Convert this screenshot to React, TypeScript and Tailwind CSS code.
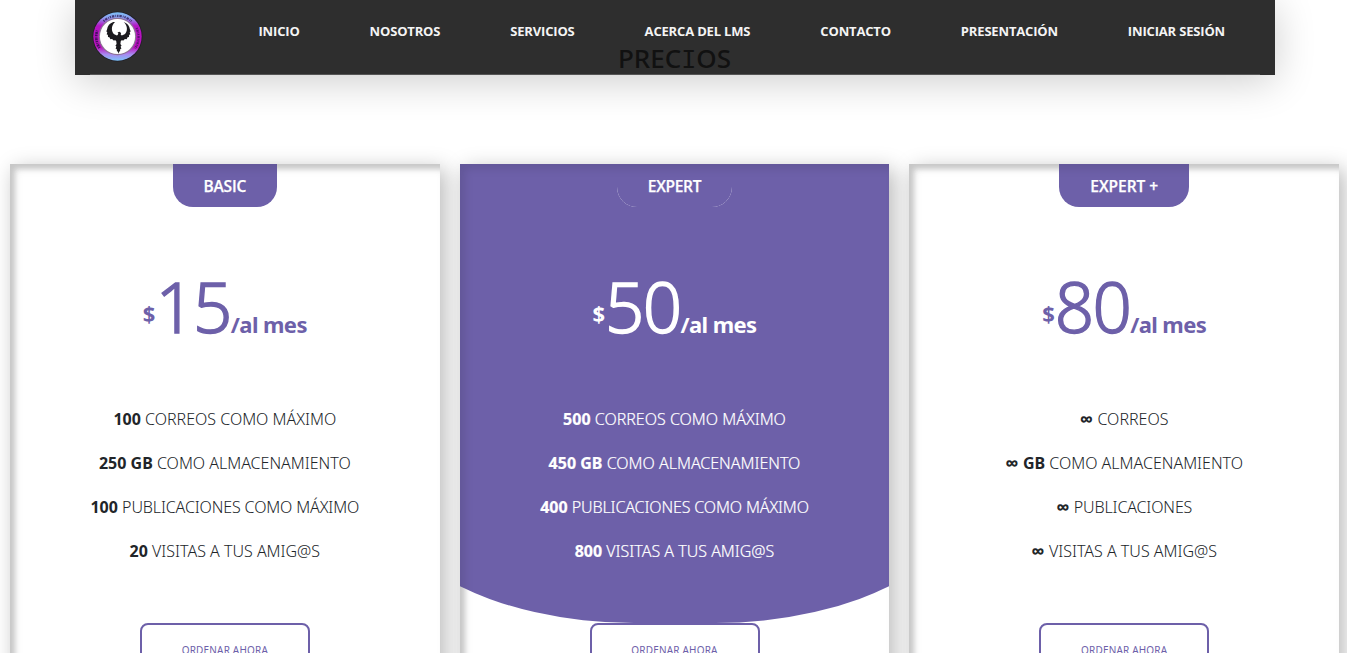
import React from 'react';

const NAV_ITEMS = ['INICIO', 'NOSOTROS', 'SERVICIOS', 'ACERCA DEL LMS', 'CONTACTO', 'PRESENTACIÓN', 'INICIAR SESIÓN'];

type Feature = { amount: string; unit?: string; label: string };
type Plan = { name: string; badgeClass: string; price: string; featured?: boolean; features: Feature[] };

const PLANS: Plan[] = [
  {
    name: 'BASIC',
    badgeClass: 'w-[104px] tracking-[-0.15px]',
    price: '15',
    features: [
      { amount: '100', label: 'CORREOS COMO MÁXIMO' },
      { amount: '250', unit: 'GB', label: 'COMO ALMACENAMIENTO' },
      { amount: '100', label: 'PUBLICACIONES COMO MÁXIMO' },
      { amount: '20', label: 'VISITAS A TUS AMIG@S' },
    ],
  },
  {
    name: 'EXPERT',
    badgeClass: 'w-[115px] tracking-[-0.3px]',
    price: '50',
    featured: true,
    features: [
      { amount: '500', label: 'CORREOS COMO MÁXIMO' },
      { amount: '450', unit: 'GB', label: 'COMO ALMACENAMIENTO' },
      { amount: '400', label: 'PUBLICACIONES COMO MÁXIMO' },
      { amount: '800', label: 'VISITAS A TUS AMIG@S' },
    ],
  },
  {
    name: 'EXPERT +',
    badgeClass: 'w-[130px] tracking-[-0.05px]',
    price: '80',
    features: [
      { amount: '∞', label: 'CORREOS' },
      { amount: '∞', unit: 'GB', label: 'COMO ALMACENAMIENTO' },
      { amount: '∞', label: 'PUBLICACIONES' },
      { amount: '∞', label: 'VISITAS A TUS AMIG@S' },
    ],
  },
];

function Logo() {
  return (
    <svg viewBox="0 0 56 56" className="h-14 w-14 shrink-0">
      <defs>
        <linearGradient id="ring" x1="0" y1="0" x2="0" y2="1">
          <stop offset="0" stopColor="#7cc0f4" />
          <stop offset="0.12" stopColor="#8f9cf0" />
          <stop offset="0.28" stopColor="#b414c4" />
          <stop offset="0.72" stopColor="#bb12bd" />
          <stop offset="0.87" stopColor="#a88af0" />
          <stop offset="1" stopColor="#7cc4f8" />
        </linearGradient>
      </defs>
      <circle cx="27.5" cy="28.5" r="25" fill="#1f1d26" />
      <circle cx="27.5" cy="28.5" r="24.2" fill="url(#ring)" />
      <circle cx="27.5" cy="28.5" r="18.8" fill="#8d7396" />
      <circle cx="27.5" cy="28.5" r="17.6" fill="#fff" />
      <g fill="none" stroke="#251046">
        <path d="M13.5 13.2a21 21 0 0 1 28 0" strokeWidth="2.2" strokeDasharray="1.4 .9 2.4 1 .8 .9" opacity=".7" />
        <path d="M9.5 40a21 21 0 0 1-2.2-18" strokeDasharray="1.2 .8 2 .7 .8 .8" strokeWidth="2.6" opacity=".8" />
        <path d="M46.5 20a21 21 0 0 1-1.3 20.5" strokeDasharray="1.2 .8 2 .7 .8 .8" strokeWidth="2.2" opacity=".6" />
      </g>
      {/* phoenix: raised wings with feathered edges, head and tail */}
      <g fill="#1b1a1e">
        <path d="M23.2 14c-3.4 1.2-5.8 4-6.100 7.200l-.8 2.300 1 .6-.6 2.300 1.200.4.1 2.300 1.400.2 1 1.900 1.700-.1 1.500 1.300 1.700-.1.9.7.4 3-1.200 1.800 1 .8-.8 2.200 1.100.3.3 2.400.7-.3.8 2.500.8-2.500.7.300.3-2.400 1.100-.3-.8-2.200 1-.8-1.200-1.800.4-3 .9-.7 1.700.1 1.500-1.300 1.700.1 1-1.900 1.400-.2.1-2.300 1.200-.4-.6-2.300 1-.6-.8-2.300c-.3-3.200-2.700-6-6.100-7.200 2 2 3.200 4.300 3.100 6.600.1 2.300-.8 4.500-2.300 5.700l-2.800 1.200-1.100-.9.400-1.600-1.700-1.300-1.900.8.8.7-.3 1.400-1 .9-2.800-1.200c-1.500-1.200-2.400-3.400-2.300-5.700-.1-2.300 1.100-4.600 3.100-6.600z" />
      </g>
    </svg>
  );
}

function Navbar() {
  return (
    <header className="absolute left-[75px] top-0 flex h-[75px] w-[1200px] bg-[#2e2e2e] px-[15px] shadow-[0_6px_40px_rgba(0,0,0,0.2)]">
      <div className="flex grow justify-between border-b border-[#555]">
        <div className="pt-2">
          <Logo />
        </div>
        <nav className="mr-[35px] flex gap-[70px] pt-[21px] font-['Open_Sans',sans-serif] text-[13px] font-bold leading-5 tracking-[-0.17px] text-[#f4f4f4]">
          {NAV_ITEMS.map((item) => (
            <a key={item} className="whitespace-nowrap">
              {item}
            </a>
          ))}
        </nav>
      </div>
    </header>
  );
}

function FeatureRow({ amount, unit, label }: Feature) {
  return (
    <li className="h-6 whitespace-nowrap">
      <b className="font-bold">
        {amount === '∞' ? (
          <span className="relative top-px font-['Open_Sans',sans-serif] text-[19px] leading-none">{amount}</span>
        ) : (
          amount
        )}
        {unit && ` ${unit}`}
      </b>{' '}
      <span className={label.startsWith('PUB') ? 'tracking-[-0.13px]' : ''}>{label}</span>
    </li>
  );
}

function PlanCard({ name, badgeClass, price, featured, features }: Plan) {
  return (
    <article className="relative h-[620px] min-w-0 flex-1 bg-white shadow-[5px_5px_20px_rgba(0,0,0,0.28),inset_5px_5px_5px_rgba(0,0,0,0.14)]">
      {featured && (
        <div className="absolute inset-x-0 top-0 h-[459px] overflow-hidden">
          <div className="absolute -left-[20%] -right-[20%] inset-y-0 rounded-b-[260px_143px] bg-[#6d60a9]" />
        </div>
      )}
      <div className="relative flex flex-col items-center font-['Noto_Sans',sans-serif]">
        <div className={featured ? 'rounded-b-[20px] bg-white' : 'rounded-b-[20px]'}>
          <h3
            className={`h-[43px] whitespace-nowrap rounded-b-[20px] bg-[#6d60a9] pt-[10px] text-center font-['Open_Sans',sans-serif] text-[15.5px] font-semibold leading-6 text-white [-webkit-text-stroke:0.25px] ${badgeClass}`}
          >
            {name}
          </h3>
        </div>
        <p className={`mt-[49px] flex h-[100px] items-baseline leading-[100px] ${featured ? 'text-white' : 'text-[#6d60a9]'}`}>
          <span className="relative -top-[11px] text-[22px] font-bold">$</span>
          <span className="text-[69px] font-light tracking-[-1.7px] [-webkit-text-stroke:1.4px]">{price}</span>
          <span className="text-[22px] font-bold tracking-[-0.6px]">/al mes</span>
        </p>
        <ul
          className={`mt-[51px] flex flex-col gap-5 text-center text-[16px] font-light leading-6 ${
            featured ? 'text-white [-webkit-text-stroke:0.2px]' : 'text-[#212529]'
          }`}
        >
          {features.map((f) => (
            <FeatureRow key={f.label} {...f} />
          ))}
        </ul>
        <button className="mt-[60px] h-[54px] w-[170px] rounded-lg border-2 border-[#6d60a9] bg-white text-[10px] tracking-[0.18px] text-[#6d60a9]">
          ORDENAR AHORA
        </button>
      </div>
      <div className="pointer-events-none absolute inset-0 shadow-[inset_5px_5px_8px_rgba(0,0,0,0.1)]" />
    </article>
  );
}

export default function App() {
  return (
    <div className="relative h-[653px] w-full overflow-hidden bg-white">
      <Navbar />
      <main className="relative w-[1349px]">
        <h2 className="h-[164px] pt-10 text-center font-['Noto_Sans',sans-serif] text-[26px] font-medium leading-9 text-[#111]">
          PREC<span className="font-['DejaVu_Sans_Mono',monospace] text-[25px]">I</span>OS
        </h2>
        <section className="flex gap-5 px-[10px]">
          {PLANS.map((plan) => (
            <PlanCard key={plan.name} {...plan} />
          ))}
        </section>
      </main>
    </div>
  );
}
